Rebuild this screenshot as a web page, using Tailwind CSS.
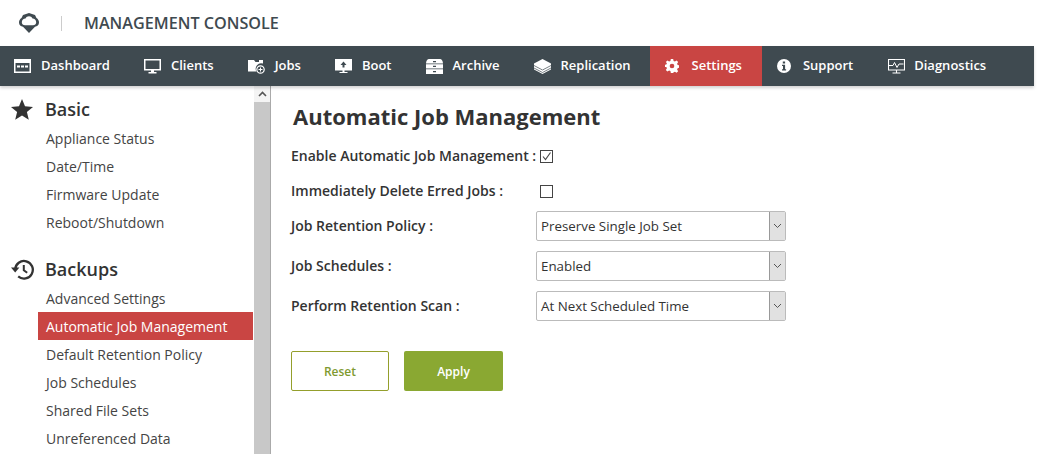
<!DOCTYPE html>
<html lang="en">
<head>
  <meta charset="UTF-8">
  <title>Management Console</title>
  <script src="https://cdn.jsdelivr.net/npm/@tailwindcss/browser@4"></script>
</head>
<body class="bg-white h-[454px] overflow-hidden font-['Open_Sans',sans-serif] text-[#333]">
  <!-- header -->
  <header class="h-[46px] flex items-center">
    <svg class="ml-[19px] w-[20px] h-[20px]" viewBox="0 0 20 20">
      <path d="M4 2L10 0l6 2 1.500 3C19 6 20 7.500 20 9.500c0 2.500-1.800 4-4 4.300L10 20l-6-6.200C1.800 13.500 0 12 0 9.500 0 7.500 1 6 2.500 5z" fill="#3f4a50"/>
      <path d="M6.500 5.500c.7-1.300 2-2.200 3.500-2.200s2.800.9 3.500 2.200c2 .1 3.700 1.500 3.700 3.700 0 1.800-1.400 3.100-3.200 3.100H6c-1.800 0-3.200-1.300-3.200-3.100 0-2.200 1.700-3.600 3.700-3.700z" fill="#fff"/>
    </svg>
    <span class="ml-[22px] w-px h-[15px] bg-[#ccc]"></span>
    <h1 class="ml-[22px] text-[16.2px] font-semibold text-[#3f4a50]">MANAGEMENT CONSOLE</h1>
  </header>

  <!-- main nav -->
  <nav class="w-[1034px] h-10 bg-[#3f4a50] flex text-white text-[13px] font-semibold shadow-[0_2px_3px_rgba(0,0,0,0.18)] relative">
    <a class="flex items-center gap-[10px] pl-[14px] pr-5">
      <svg class="w-[17px] h-[14px]" viewBox="0 0 17 14"><path fill="#fff" fill-rule="evenodd" d="M0 0h17v14H0zM1.500 4v8.500h14V4zM3 6.500h3v2H3zM7 6.500h3v2H7zM11 6.500h3v2h-3z"/></svg>
      Dashboard
    </a>
    <a class="flex items-center gap-[10px] pl-[14px] pr-5">
      <svg class="w-[17px] h-[15px]" viewBox="0 0 17 15"><path fill="#fff" fill-rule="evenodd" d="M0 0h17v11.500H0zM1.500 1.500v8.500h14V1.500zM7 11.500h3V13h2.500v1.500h-8V13H7z"/></svg>
      Clients
    </a>
    <a class="flex items-center gap-[10px] pl-[14px] pr-5">
      <svg class="w-[17px] h-[15px]" viewBox="0 0 17 15"><path fill="#fff" d="M0 1h6l1.500 2H11V1h4v3.500a5.500 5.500 0 0 0-6.500 8H0z"/><circle cx="12.500" cy="10.500" r="3.700" fill="none" stroke="#fff" stroke-width="1.200"/><path stroke="#fff" d="M12.500 8.500v4M10.500 10.500h4"/></svg>
      Jobs
    </a>
    <a class="flex items-center gap-[10px] pl-[14px] pr-5">
      <svg class="w-[17px] h-[15px]" viewBox="0 0 17 15"><path fill="#fff" fill-rule="evenodd" d="M0 0h17v11.500H0zM8.500 2.500L5.500 6h2v2.500h2V6h2zM7.500 11.500h2V13h3v1h-8v-1h3z"/></svg>
      Boot
    </a>
    <a class="flex items-center gap-[10px] pl-[14px] pr-5">
      <svg class="w-[17px] h-[15px]" viewBox="0 0 17 15"><path fill="#fff" d="M3 0h11c1.500 0 3 2 3 4.500H0C0 2 1.500 0 3 0zM0 5.300h17v4.200H0zM0 10.300h17V15H0z"/><path fill="#3f4a50" d="M7 2h3v1.200H7zM7 6.800h3v1.200H7zM7 12h3v1.200H7z"/></svg>
      Archive
    </a>
    <a class="flex items-center gap-[10px] pl-[14px] pr-[19px]">
      <svg class="w-[17px] h-[15px]" viewBox="0 0 17 15"><path fill="#fff" d="M8.500 0L17 4.500v6L8.500 15 0 10.500v-6z"/><path fill="none" stroke="#3f4a50" stroke-width=".7" d="M0 6.500l8.500 4.500L17 6.500M0 9l8.500 4.500L17 9"/></svg>
      Replication
    </a>
    <a class="flex items-center gap-[13px] pl-[15px] pr-5 bg-[#c94543]">
      <svg class="w-[14px] h-[14px]" viewBox="0 0 24 24"><path fill="#fff" fill-rule="evenodd" d="M10 0h4l.7 3.300 2.300 1L19.800 2.500l2.800 2.800-1.900 2.800 1 2.300 3.300.6v4l-3.300.7-1 2.300 1.900 2.800-2.800 2.800-2.800-1.900-2.300 1L14 24h-4l-.7-3.300-2.300-1-2.800 1.900-2.800-2.800 1.900-2.800-1-2.300L-1 14v-4l3.300-.6 1-2.300L1.400 5.300l2.800-2.800L7 4.300l2.300-1zM12 8a4 4 0 1 0 0 8 4 4 0 0 0 0-8z"/></svg>
      Settings
    </a>
    <a class="flex items-center gap-[12px] pl-[15px] pr-5">
      <svg class="w-[14px] h-[14px]" viewBox="0 0 14 14"><circle cx="7" cy="7" r="7" fill="#fff"/><path fill="#3f4a50" d="M5.800 2.500h2.300v2H5.800zM5 5.800h3.100v4.400h1v1.300H5v-1.300h1V7.100H5z"/></svg>
      Support
    </a>
    <a class="flex items-center gap-[9px] pl-[15px] pr-5">
      <svg class="w-[17px] h-[15px]" viewBox="0 0 17 15" fill="none" stroke="#fff"><path d="M.5.500h16v10.500H.5zM8.500 11v2.500M4.500 14h8" stroke-width="1.100"/><path d="M1 6.500h4l1.500-3 2.500 5 2-3.500h4.500" stroke-width="1"/></svg>
      Diagnostics
    </a>
  </nav>

  <div class="flex h-[368px] overflow-hidden">
    <!-- sidebar -->
    <aside class="w-[254px] shrink-0 pt-[11px] pr-px text-sm text-[#444]">
      <section class="flex items-center h-6 gap-3 pl-[11px]">
        <svg class="w-[22px] h-[21px]" viewBox="0 0 22 21"><path fill="#333" d="M11 0l3 7.300 8 .6-6.100 5.100 1.900 7.800L11 16.600l-6.800 4.200 1.900-7.800L0 7.900l8-.6z"/></svg>
        <h2 class="text-lg font-semibold text-[#333]">Basic</h2>
      </section>
      <ul class="mt-[3px] ml-[38px]">
        <li class="h-7 leading-[30px] pl-2">Appliance Status</li>
        <li class="h-7 leading-[30px] pl-2">Date/Time</li>
        <li class="h-7 leading-[30px] pl-2">Firmware Update</li>
        <li class="h-7 leading-[30px] pl-2">Reboot/Shutdown</li>
      </ul>
      <section class="flex items-center h-6 gap-[11px] pl-[11px] mt-[21px]">
        <svg class="w-[23px] h-[21px]" viewBox="0 0 23 21" fill="none" stroke="#333" stroke-width="2.300"><path d="M4.200 10.500a8.800 8.800 0 1 1 3 6.900"/><path d="M12.800 6v5.200l3.400 2.600" stroke-width="2"/><path d="M0 8.500h8.400L4.200 13.500z" fill="#333" stroke="none"/></svg>
        <h2 class="text-lg font-semibold text-[#333]">Backups</h2>
      </section>
      <ul class="mt-[3px] ml-[38px]">
        <li class="h-7 leading-[30px] pl-2">Advanced Settings</li>
        <li class="h-7 leading-[30px] pl-2 bg-[#c94543] text-white">Automatic Job Management</li>
        <li class="h-7 leading-[30px] pl-2">Default Retention Policy</li>
        <li class="h-7 leading-[30px] pl-2">Job Schedules</li>
        <li class="h-7 leading-[30px] pl-2">Shared File Sets</li>
        <li class="h-7 leading-[30px] pl-2">Unreferenced Data</li>
      </ul>
    </aside>

    <!-- scrollbar -->
    <div class="w-4 shrink-0 bg-[#c8c8c8]">
      <div class="h-[16px] bg-[#f4f4f4] flex items-center justify-center">
        <svg class="w-[9px] h-[6px]" viewBox="0 0 9 6" fill="none" stroke="#555" stroke-width="1.600"><path d="M1 5l3.500-3.500L8 5"/></svg>
      </div>
    </div>

    <!-- content -->
    <main class="flex-1 border-l border-[#aaa] pl-5 pt-[17px] font-semibold">
      <h2 class="ml-[2px] text-[22px] leading-[26px] font-bold text-[#333]">Automatic Job Management</h2>
      <div class="mt-[12px] grid grid-cols-[245px_250px] gap-y-[5px] items-center text-sm">
        <label class="h-[30px] leading-[30px] whitespace-nowrap">Enable Automatic Job Management :</label>
        <span class="ml-1 w-[13px] h-[13px] border border-[#444] bg-white flex items-center justify-center">
          <svg class="w-[11px] h-[11px]" viewBox="0 0 11 11" fill="none" stroke="#444" stroke-width="1.100"><path d="M2 5.500l2.500 3L9.500 1.500"/></svg>
        </span>
        <label class="h-[30px] leading-[30px] whitespace-nowrap">Immediately Delete Erred Jobs :</label>
        <span class="ml-1 w-[13px] h-[13px] border border-[#444] bg-white"></span>
      </div>
      <div class="mt-[5px] grid grid-cols-[245px_250px] gap-y-[10px] items-center text-sm">
        <label class="h-[30px] leading-[30px]">Job Retention Policy :</label>
        <div class="h-[30px] border border-[#bbb] rounded-[2px] flex items-center justify-between pl-1 text-[13.33px] font-normal">
          <span class="pt-[2px]">Preserve Single Job Set</span>
          <span class="w-4 h-full bg-[#e1e1e1] border-l border-[#999] flex items-center justify-center">
            <svg class="w-[9px] h-[6px]" viewBox="0 0 9 6" fill="none" stroke="#555"><path d="M1 1l3.500 3.500L8 1"/></svg>
          </span>
        </div>
        <label class="h-[30px] leading-[30px]">Job Schedules :</label>
        <div class="h-[30px] border border-[#bbb] rounded-[2px] flex items-center justify-between pl-1 text-[13.33px] font-normal">
          <span class="pt-[2px]">Enabled</span>
          <span class="w-4 h-full bg-[#e1e1e1] border-l border-[#999] flex items-center justify-center">
            <svg class="w-[9px] h-[6px]" viewBox="0 0 9 6" fill="none" stroke="#555"><path d="M1 1l3.500 3.500L8 1"/></svg>
          </span>
        </div>
        <label class="h-[30px] leading-[30px]">Perform Retention Scan :</label>
        <div class="h-[30px] border border-[#bbb] rounded-[2px] flex items-center justify-between pl-1 text-[13.33px] font-normal">
          <span class="pt-[2px]">At Next Scheduled Time</span>
          <span class="w-4 h-full bg-[#e1e1e1] border-l border-[#999] flex items-center justify-center">
            <svg class="w-[9px] h-[6px]" viewBox="0 0 9 6" fill="none" stroke="#555"><path d="M1 1l3.500 3.500L8 1"/></svg>
          </span>
        </div>
      </div>
      <div class="mt-[30px] flex gap-[15px] text-xs">
        <button class="w-[98px] h-10 pt-[2px] border border-[#949f2c] rounded-[2px] text-[#7f9a30] font-semibold">Reset</button>
        <button class="w-[99px] h-10 pt-[2px] bg-[#8aa832] rounded-[2px] text-white font-semibold">Apply</button>
      </div>
    </main>
  </div>
</body>
</html>
